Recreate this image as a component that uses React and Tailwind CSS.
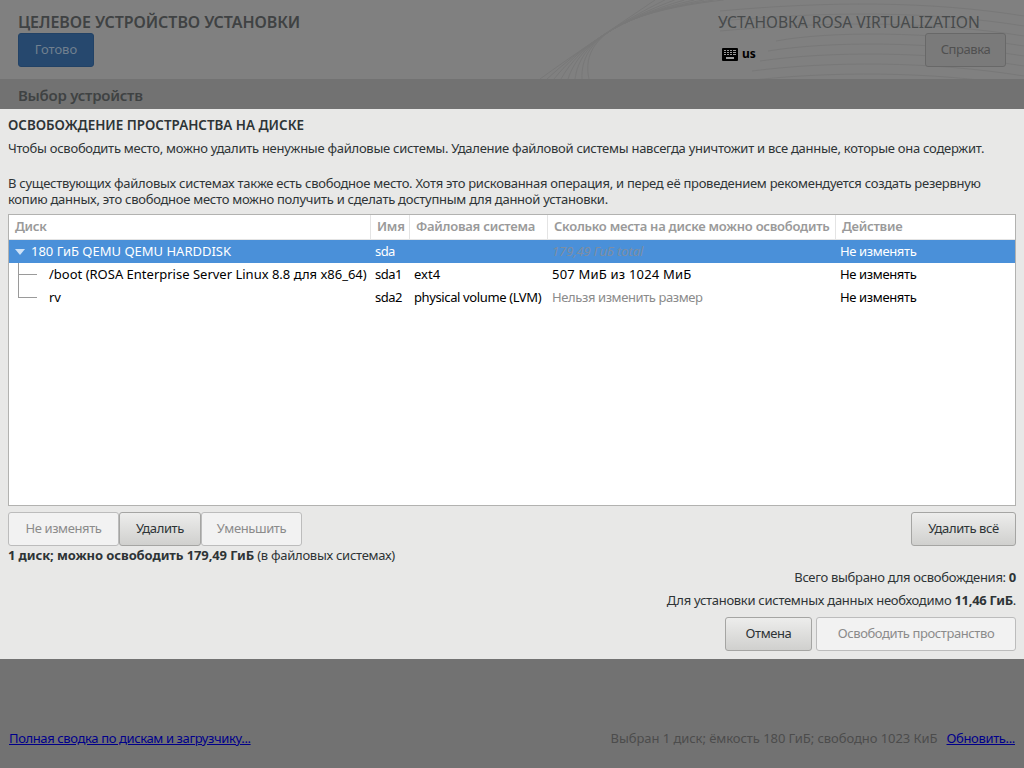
const font = { fontFamily: '"Noto Sans", "Open Sans", sans-serif' };

const columns = "grid grid-cols-[361px_39px_138px_288px_1fr]";

function HeadCell({ children, first }) {
  return (
    <div className={`h-[25px] pt-[2px] pl-[6px] text-[13px] tracking-[-0.25px] font-semibold text-[#9a9a9a] border-b border-[#e4e4e4] whitespace-nowrap ${first ? "" : "border-l"}`}>
      {children}
    </div>
  );
}

function Button({ children, disabled, className = "" }) {
  const look = disabled
    ? "bg-[#f2f2f2] text-[#8b8b8b] border-[#bcbcbc]"
    : "bg-gradient-to-b from-[#ededec] to-[#d0d0ce] text-[#2e3436] border-[#a5a5a3]";
  return (
    <div className={`h-[34px] flex items-center justify-center rounded-[3px] border text-[13px] tracking-[-0.4px] whitespace-nowrap ${look} ${className}`}>
      {children}
    </div>
  );
}

const fan = [0, 7, 14, 21, 28, 35, 42, 49];
const ripples = [6, 16, 26, 36, 46, 56, 66, 76];

function HeaderLines() {
  return (
    <svg className="absolute right-0 top-0" width="494" height="79" viewBox="0 0 494 79" fill="none" stroke="#787878" strokeWidth="1">
      {fan.map((x) => (
        <path key={x} d={`M${10 + x} 79C50 ${50 - x / 4} 90 ${24 - x / 4} ${125 + x * 1.4} 0`} />
      ))}
      {ripples.map((y, i) => (
        <path key={y} d={`M${i < 3 ? 190 : 270 - i * 8} ${y + 5}C${300} ${y - 5} ${400} ${y - 5} 494 ${y + 10}`} />
      ))}
    </svg>
  );
}

function KeyboardIcon() {
  return (
    <svg width="16" height="13" viewBox="0 0 16 13" className="block">
      <rect width="16" height="13" rx="1" fill="#000" />
      <g fill="#9a9a9a">
        <rect x="2" y="2" width="2" height="1" />
        <rect x="5" y="2" width="2" height="1" />
        <rect x="8" y="2" width="2" height="1" />
        <rect x="11" y="2" width="3" height="1" />
        <rect x="2" y="4" width="2" height="1" />
        <rect x="5" y="4" width="2" height="1" />
        <rect x="8" y="4" width="2" height="1" />
        <rect x="11" y="4" width="3" height="1" />
        <rect x="2" y="6" width="2" height="1" />
        <rect x="5" y="6" width="2" height="1" />
        <rect x="8" y="6" width="2" height="1" />
        <rect x="11" y="6" width="3" height="1" />
        <rect x="4" y="9" width="8" height="2" />
      </g>
    </svg>
  );
}

export default function App() {
  return (
    <div className="h-screen w-[1024px] flex flex-col overflow-hidden text-[#2e3436]" style={font}>
      <header className="relative h-[79px] bg-[#808080] flex justify-between shrink-0 overflow-hidden">
        <HeaderLines />
        <div className="relative pl-[18px] pt-[12px]">
          <h1 className="text-[16px] tracking-[-0.07px] leading-[21px] font-semibold text-[#3f4243]">ЦЕЛЕВОЕ УСТРОЙСТВО УСТАНОВКИ</h1>
          <div className="w-[76px] h-[34px] rounded-[3px] bg-[#26486e] border border-[#224266] flex items-center justify-center text-[13px] text-[#71808f]">
            Готово
          </div>
        </div>
        <div className="relative w-[306px] pt-[12px]">
          <div className="text-[15.6px] leading-[21px] text-[#474a4b]">УСТАНОВКА ROSA VIRTUALIZATION</div>
          <div className="flex justify-between pr-[18px]">
            <div className="flex items-center gap-[4px] pl-[4px] pt-[8px] h-[34px]">
              <KeyboardIcon />
              <span className="text-[12px] font-bold text-black">us</span>
            </div>
            <div className="w-[81px] h-[34px] rounded-[3px] border border-[#686868] bg-[#7a7a7a] flex items-center justify-center text-[13px] tracking-[-0.4px] text-[#505050]">
              Справка
            </div>
          </div>
        </div>
      </header>

      <div className="h-[30px] shrink-0 bg-[#727272] pl-[18px] pt-[6px] text-[15px] tracking-[-0.27px] leading-[20px] font-semibold text-[#3f4243]">
        Выбор устройств
      </div>

      <main className="h-[550px] shrink-0 bg-[#e8e8e7] px-[8px] text-[13px] flex flex-col">
        <h2 className="mt-[7px] text-[13.4px] leading-[18px] font-semibold">ОСВОБОЖДЕНИЕ ПРОСТРАНСТВА НА ДИСКЕ</h2>
        <p className="mt-[6px] leading-[16px] tracking-[-0.27px] whitespace-nowrap">
          Чтобы освободить место, можно удалить ненужные файловые системы. Удаление файловой системы навсегда уничтожит и все данные, которые она содержит.
        </p>
        <p className="mt-[19px] leading-[16px] tracking-[-0.27px]">
          В существующих файловых системах также есть свободное место. Хотя это рискованная операция, и перед её проведением рекомендуется создать резервную копию данных, это свободное место можно получить и сделать доступным для данной установки.
        </p>

        <div className="mt-[7px] h-[292px] bg-white border border-[#b2b2b0] text-black">
          <div className={columns}>
            <HeadCell first>Диск</HeadCell>
            <HeadCell>Имя</HeadCell>
            <HeadCell>Файловая система</HeadCell>
            <HeadCell>Сколько места на диске можно освободить</HeadCell>
            <HeadCell>Действие</HeadCell>
          </div>
          <div className={`${columns} h-[23px] leading-[23px] bg-[#4a90d9] text-white`}>
            <div className="flex items-center whitespace-nowrap">
              <span className="ml-[6px] mr-[6px] w-0 h-0 border-x-[5px] border-x-transparent border-t-[6px] border-t-[#cfe2f6]" />
              180 ГиБ QEMU QEMU HARDDISK
            </div>
            <div className="pl-[5px] tracking-[-0.6px]">sda</div>
            <div />
            <div className="pl-[5px] text-[#7d8ea3] italic tracking-[-0.1px] whitespace-nowrap">179,49 ГиБ total</div>
            <div className="pl-[5px] tracking-[-0.36px]">Не изменять</div>
          </div>
          <div className={`${columns} h-[23px] leading-[23px]`}>
            <div className="relative pl-[40px] whitespace-nowrap">
              <span className="absolute left-[9px] top-0 h-[23px] border-l border-[#9a9a9a]" />
              <span className="absolute left-[9px] top-[11px] w-[19px] border-t border-[#9a9a9a]" />
              /boot (ROSA Enterprise Server Linux 8.8 для x86_64)
            </div>
            <div className="pl-[5px] tracking-[-0.5px]">sda1</div>
            <div className="pl-[5px]">ext4</div>
            <div className="pl-[5px] tracking-[0.2px]">507 МиБ из 1024 МиБ</div>
            <div className="pl-[5px] tracking-[-0.36px]">Не изменять</div>
          </div>
          <div className={`${columns} h-[23px] leading-[23px]`}>
            <div className="relative pl-[40px]">
              <span className="absolute left-[9px] top-0 h-[12px] w-[19px] border-l border-b border-[#9a9a9a]" />
              rv
            </div>
            <div className="pl-[5px] tracking-[-0.5px]">sda2</div>
            <div className="pl-[5px] tracking-[-0.38px] whitespace-nowrap">physical volume (LVM)</div>
            <div className="pl-[5px] text-[#8b8b8b] tracking-[-0.4px]">Нельзя изменить размер</div>
            <div className="pl-[5px] tracking-[-0.36px]">Не изменять</div>
          </div>
        </div>

        <div className="mt-[6px] flex justify-between">
          <div className="flex">
            <Button disabled className="w-[111px]">Не изменять</Button>
            <Button className="w-[82px]">Удалить</Button>
            <Button disabled className="w-[101px]">Уменьшить</Button>
          </div>
          <Button className="w-[105px]">Удалить всё</Button>
        </div>

        <div className="leading-[18px] tracking-[-0.27px]">
          <b className="font-bold tracking-[-0.1px]">1 диск; можно освободить 179,49 ГиБ</b> (в файловых системах)
        </div>

        <div className="mt-[4px] leading-[18px] tracking-[-0.3px] text-right">
          Всего выбрано для освобождения: <b className="font-bold">0</b>
        </div>
        <div className="mt-[5px] leading-[18px] tracking-[-0.29px] text-right">
          Для установки системных данных необходимо <b className="font-bold">11,46 ГиБ</b>.
        </div>

        <div className="mt-[8px] flex justify-end gap-[4px]">
          <Button className="w-[87px]">Отмена</Button>
          <Button disabled className="w-[200px]">Освободить пространство</Button>
        </div>
      </main>

      <footer className="flex-1 bg-[#727272] flex justify-between items-end px-[9px] pb-[21px] text-[13px] leading-[18px]">
        <a href="#" className="text-[#00008b] underline tracking-[-0.38px]">Полная сводка по дискам и загрузчику...</a>
        <div className="flex gap-[9px]">
          <span className="text-[#4c4c4c] tracking-[-0.06px]">Выбран 1 диск; ёмкость 180 ГиБ; свободно 1023 КиБ</span>
          <a href="#" className="text-[#00008b] underline tracking-[-0.35px]">Обновить...</a>
        </div>
      </footer>
    </div>
  );
}
